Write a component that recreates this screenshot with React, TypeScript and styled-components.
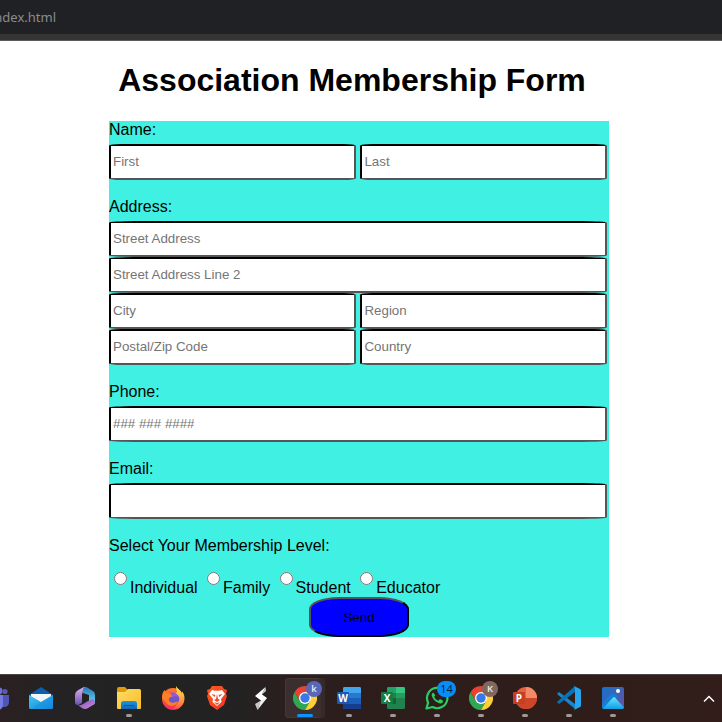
import React from "react";
import styled, { createGlobalStyle } from "styled-components";

const GlobalStyle = createGlobalStyle`
  * { box-sizing: border-box; }
  body { margin: 0; background: #fff; overflow: hidden; }
`;

const Screen = styled.div`
  width: 722px;
  height: 722px;
  display: flex;
  flex-direction: column;
  overflow: hidden;
  background: #fff;
  color: #000;
  font-family: "Liberation Sans", Arial, sans-serif;
`;

const BrowserBar = styled.header`
  height: 41px;
  flex: none;
  background: #202124;
  border-bottom: 1px solid #5b5b5b;
  display: flex;
  flex-direction: column;
`;

const Address = styled.div`
  width: 56px;
  height: 34px;
  flex: none;
  display: flex;
  justify-content: flex-end;
  align-items: center;
  overflow: hidden;
  white-space: nowrap;
  color: #8b8c8e;
  font: 13px/18px "Noto Sans", sans-serif;
`;

const BarEdge = styled.div`
  height: 6px;
  background: #353535;
`;

const Page = styled.main`
  flex: 1;
  padding: 20px 0 0 109px;
`;

const Title = styled.h1`
  margin: 0 0 22px;
  width: 486px;
  height: 38px;
  text-align: center;
  font-size: 32px;
  line-height: 38px;
  font-weight: bold;
  white-space: nowrap;
`;

const Form = styled.form`
  width: 500px;
  height: 516px;
  background: #40f1e3;
  display: flex;
  flex-direction: column;
`;

const Field = styled.section`
  margin-bottom: 18px;
`;

const Label = styled.div`
  height: 23px;
  flex: none;
  font-size: 16px;
  line-height: 18px;
`;

const Row = styled.div`
  display: flex;
  gap: 4.45px;
`;

const Input = styled.input<{ $half?: boolean }>`
  width: ${(p) => (p.$half ? "247px" : "498px")};
  height: 36px;
  flex: none;
  padding: 0 2px 2px;
  border: 2px solid;
  border-color: #000 #555 #555 #000;
  border-radius: 5%;
  background: #fff;
  font: 13.333px "Liberation Sans", Arial, sans-serif;
  outline: none;
  &::placeholder { color: #757575; }
`;

const Levels = styled.div`
  display: flex;
  flex: none;
  gap: 4.45px;
  height: 30px;
  margin-top: 7px;
`;

const Level = styled.label`
  display: flex;
  align-items: flex-start;
  font-size: 16px;
  line-height: 18px;
  input {
    width: 13px;
    height: 13px;
    margin: 5px 3px 0 5px;
  }
  span { margin-top: 12px; }
`;

const Send = styled.button`
  width: 100px;
  height: 40px;
  flex: none;
  margin: 0 0 0 200px;
  padding: 0;
  background: #00f;
  color: #000;
  border: 2px solid;
  border-color: #555 #000 #000 #555;
  border-radius: 30%;
  font: 13.333px "Liberation Sans", Arial, sans-serif;
`;

const Taskbar = styled.footer`
  height: 48px;
  flex: none;
  display: flex;
  padding-right: 4px;
  border-top: 1px solid #4b4646;
  background: linear-gradient(90deg, #2c2021 0, #242224 45px, #232223 230px, #2b1f1e 290px, #2d1d1b 400px, #321d1a 722px);
`;

const Tasks = styled.div`
  display: flex;
  flex: 1;
  margin-left: -25px;
`;

const Task = styled.div<{ $active?: boolean }>`
  position: relative;
  width: 40px;
  height: 40px;
  margin: 3px 2px 0;
  flex: none;
  display: flex;
  flex-direction: column;
  align-items: center;
  border-radius: 4px;
  ${(p) => p.$active && "background: #3a2f2e; box-shadow: inset -4px 0 #352a29, inset 0 0 0 1px #443938;"}
  svg { display: block; margin-top: 8px; flex: none; }
`;

const Indicator = styled.i<{ $active?: boolean }>`
  width: ${(p) => (p.$active ? 16 : 6)}px;
  height: 3px;
  margin-top: 4px;
  border-radius: 2px;
  background: ${(p) => (p.$active ? "#0a94ff" : "#a19997")};
`;

const Badge = styled.b<{ $color: string; $wide?: boolean }>`
  position: absolute;
  top: 3px;
  right: ${(p) => (p.$wide ? 1 : 3)}px;
  width: ${(p) => (p.$wide ? 19 : 16)}px;
  height: 16px;
  border-radius: 8px;
  background: ${(p) => p.$color};
  color: ${(p) => (p.$wide ? "#03203a" : "#eee")};
  text-align: center;
  font: ${(p) => (p.$wide ? "11px" : "600 9.5px")}/16px "Open Sans", sans-serif;
`;

const Overflow = styled.div`
  width: 18px;
  display: flex;
  align-items: center;
  justify-content: center;
`;

const Icon = ({ children }: { children: React.ReactNode }) => (
  <svg width="24" height="24" viewBox="0 0 24 24">{children}</svg>
);

const Grad = ({ id, from, to, vertical }: { id: string; from: string; to: string; vertical?: boolean }) => (
  <linearGradient id={id} x1="0" y1="0" x2={vertical ? "0" : "1"} y2="1">
    <stop stopColor={from} />
    <stop offset="1" stopColor={to} />
  </linearGradient>
);

const Teams = () => (
  <Icon>
    <circle cx="14" cy="5" r="3.5" fill="#6b70d6" />
    <circle cx="20" cy="5.5" r="2.6" fill="#5559b9" />
    <path d="M16 9h8v7c0 3-2 5-5 5h-3z" fill="#5056b5" />
    <path d="M6 9h12v9c0 4-2 6-5 6s-7-1-7-6z" fill="#777ce0" />
  </Icon>
);

const Mail = () => (
  <Icon>
    <defs><Grad id="mail" from="#40c8ef" to="#1683dd" /></defs>
    <path d="M0 9 12 1l12 8v10H0z" fill="#0d5daf" />
    <path d="M2 8h20v9H2z" fill="#f2f5f6" />
    <path d="m0 9 12 7 12-7v12.500q0 1.500-1.500 1.500h-21Q0 23 0 21.500z" fill="url(#mail)" />
    <path d="M2 22.500 12 16l12-7v12.500q0 1.500-1.500 1.500z" fill="#158de1" opacity=".45" />
  </Icon>
);

const Office = () => (
  <Icon>
    <defs>
      <Grad id="ofa" from="#e0b2ef" to="#6753b5" vertical />
      <Grad id="ofb" from="#2e76b8" to="#68e0f6" vertical />
      <Grad id="ofc" from="#7048ad" to="#cf8fe4" />
    </defs>
    <path d="M13 1q-2-.5-4 1L4.500 4.500Q2 6 2 9v7q0 3 3 3l4-2V9q0-3 2-5z" fill="url(#ofa)" />
    <path d="M11 1.500q1.500-1 4 .5l5 3q2 1 2 4v7q0 2-2 3l-4-3V9L10 7q-1-4 1-5.500" fill="url(#ofb)" />
    <path d="m3 18 6 4q3 2 6 0l5-3q2-1 2-4l-2-2-5 2-4 2.500-3 1.500-3 .5z" fill="url(#ofc)" />
  </Icon>
);

const Folder = () => (
  <Icon>
    <defs>
      <Grad id="fold" from="#ffdc65" to="#f7bd29" />
      <Grad id="tray" from="#1f93df" to="#0f66b6" vertical />
    </defs>
    <path d="M0 3q0-2 2-2h6l3 3h11q2 0 2 2v8H0z" fill="#dc9a0c" />
    <path d="M0 6h8l3-3h11.500Q24 3 24 5v17q0 1-1 1H1q-1 0-1-1z" fill="url(#fold)" />
    <path d="M4 23v-5.500Q4 15 6.500 15h11q2.500 0 2.500 2.500V23z" fill="url(#tray)" />
    <path d="M7 19h10v1H7z" fill="#0b559b" />
  </Icon>
);

const Firefox = () => (
  <Icon>
    <defs>
      <Grad id="fire" from="#ff7a23" to="#f42c67" vertical />
      <Grad id="yell" from="#fff34b" to="#ff5c3c" vertical />
    </defs>
    <circle cx="12" cy="13" r="11" fill="url(#fire)" />
    <path d="M15 0c0 3 1 4 1 6l-3 3 5 5-5 9c7 0 10.500-5 10.500-11 0-3-1-5-2.500-6.500V8c-1-4-4.500-5-6-8" fill="url(#yell)" />
    <circle cx="12.500" cy="13" r="5.800" fill="#6a55d2" />
    <path d="M1 12c0-4 1-6 2.500-8l2 3h4l2.500 3-3 1.500c-2 1-1 4 1 5 3 1 5-1 7-1-2 5-9 6-12 1z" fill="#ff7f25" />
    <path d="M9 7c4-2 8 1 8.500 5-2-2.500-4-2-6-1z" fill="#9b59cf" />
  </Icon>
);

const Brave = () => (
  <Icon>
    <defs><Grad id="brave" from="#ff5b20" to="#ef3422" /></defs>
    <path d="M7 0h10l2 3 3 1-1 4 1 2-3 9-7 5-7-5L2 10l1-2-1-4 3-1z" fill="url(#brave)" />
    <path d="m7 4 3 .7h4L17 4l3 4-4 5 .5 3-4.500 4-4.500-4L8 13 4 8z" fill="#fff" />
    <path d="m6.500 8 4 1-1 2zM17.500 8l-4 1 1 2zM12 8l1 5 2 1-3 2-3-2 2-1zM9 16l3 1 3-1-3 3z" fill="#f14a25" />
  </Icon>
);

const Bolt = () => (
  <Icon>
    <path d="M16.500 1 6 10l6 4.500-2 4.500 8-7-5-3.500z" fill="#fff" />
    <path d="m16.500 1 .5 4-4 3.500zM6 18l6-3.500L8.500 24z" fill="#c8c8c8" />
    <path d="m12 14.500-3.500 9.500L18 12z" fill="#eee" />
  </Icon>
);

const Chrome = () => (
  <Icon>
    <path d="M12 0a12 12 0 0 1 10.400 6H12L6.800 15 1.600 6A12 12 0 0 1 12 0" fill="#e94235" />
    <path d="M1.600 6 6.800 15H17.200L12 24A12 12 0 0 1 1.600 6" fill="#32a753" />
    <path d="M12 6h10.400A12 12 0 0 1 12 24l5.200-9z" fill="#fdd134" />
    <circle cx="12" cy="12" r="6" fill="#fff" />
    <circle cx="12" cy="12" r="4.700" fill="#3779e8" />
  </Icon>
);

const Letter = styled.text`
  font: bold 10px "Open Sans", sans-serif;
  fill: #fff;
  text-anchor: middle;
`;

const Word = () => (
  <Icon>
    <rect x="6" y="1" width="18" height="22" rx="1.500" fill="#2779ce" />
    <path d="M6 7V2.500Q6 1 7.500 1h15Q24 1 24 2.500V7z" fill="#42a5ed" />
    <path d="M6 12h18v6H6z" fill="#1b60b8" />
    <path d="M6 18h18v3.500q0 1.500-1.500 1.500h-15Q6 23 6 21.500z" fill="#153f8d" />
    <rect y="6" width="12" height="12" rx="1" fill="#1859b8" />
    <Letter x="6" y="15.500">W</Letter>
  </Icon>
);

const Excel = () => (
  <Icon>
    <rect x="6" y="1" width="18" height="22" rx="1.500" fill="#20824c" />
    <path d="M6 7V2.500Q6 1 7.500 1H15v6z" fill="#22a266" />
    <path d="M15 1h7.500Q24 1 24 2.500V7h-9z" fill="#35c481" />
    <path d="M15 7h9v5h-9z" fill="#249d5e" />
    <path d="M6 12h9v6H6z" fill="#196138" />
    <rect y="6" width="12" height="12" rx="1" fill="#137d43" />
    <Letter x="6" y="15.500">X</Letter>
  </Icon>
);

const WhatsApp = () => (
  <Icon>
    <path d="m1.500 22.500 1.600-6A10.200 10.200 0 1 1 7.500 21z" fill="none" stroke="#28ce61" strokeWidth="2.200" strokeLinejoin="round" />
    <path d="M8.300 6.500c-1.500.6-2 2.300-1.200 4.200 1.500 3.500 4.500 6 7.800 6.700 2 .3 3.200-1 3.200-2.700l-3.200-1.600-1.500 1.700c-2.100-.8-3.400-2.200-4.200-4l1.200-1.400z" fill="#28ce61" />
  </Icon>
);

const PowerPoint = () => (
  <Icon>
    <circle cx="13" cy="12" r="11" fill="#e56242" />
    <path d="M13 1a11 11 0 0 1 11 11H13z" fill="#f58a68" />
    <path d="M2 12h22a11 11 0 0 1-22 0" fill="#cf4529" />
    <rect y="6" width="12" height="12" rx="1" fill="#c83e20" />
    <Letter x="6" y="15.500">P</Letter>
  </Icon>
);

const Code = () => (
  <Icon>
    <path d="m0 8 2-2 16 12v5z" fill="#1687cb" />
    <path d="M0 16 18 0v6L2 18z" fill="#0873b7" />
    <path d="m17 0 6 3q1 .5 1 1.500v15q0 1-1 1.500l-6 3q1-1 1-3V3q0-2-1-3" fill="#29a5ef" />
  </Icon>
);

const Photos = () => (
  <Icon>
    <defs>
      <Grad id="sky" from="#1272d0" to="#6c519b" />
      <Grad id="hill" from="#64e5fa" to="#159be8" vertical />
    </defs>
    <rect x="1" y="1" width="22" height="22" rx="2" fill="url(#sky)" />
    <path d="M1 18 10 8q2-1.500 4 0l3 3-13 12H3q-2 0-2-2z" fill="#1380d6" />
    <path d="M2 22.500 12 11.500q1-1 2 0l9 10q-.7 1.500-2 1.500H3z" fill="url(#hill)" />
    <circle cx="17" cy="5" r="2" fill="#fff" />
  </Icon>
);

const tasks = [
  { id: "teams", Logo: Teams },
  { id: "mail", Logo: Mail },
  { id: "office", Logo: Office },
  { id: "folder", Logo: Folder, open: true },
  { id: "firefox", Logo: Firefox },
  { id: "brave", Logo: Brave },
  { id: "bolt", Logo: Bolt },
  { id: "chrome-k", Logo: Chrome, open: true, active: true, badge: "k", color: "#5966b9" },
  { id: "word", Logo: Word, open: true },
  { id: "excel", Logo: Excel, open: true },
  { id: "whatsapp", Logo: WhatsApp, open: true, badge: "14", color: "#078df8" },
  { id: "chrome", Logo: Chrome, open: true, badge: "K", color: "#806860" },
  { id: "powerpoint", Logo: PowerPoint, open: true },
  { id: "code", Logo: Code, open: true },
  { id: "photos", Logo: Photos, open: true },
];

export default function App() {
  return (
    <Screen>
      <GlobalStyle />
      <BrowserBar>
        <Address>index.html</Address>
        <BarEdge />
      </BrowserBar>
      <Page>
        <Title>Association Membership Form</Title>
        <Form>
          <Field>
            <Label>Name:</Label>
            <Row><Input $half placeholder="First" /><Input $half placeholder="Last" /></Row>
          </Field>
          <Field>
            <Label>Address:</Label>
            <Row><Input placeholder="Street Address" /></Row>
            <Row><Input placeholder="Street Address Line 2" /></Row>
            <Row><Input $half placeholder="City" /><Input $half placeholder="Region" /></Row>
            <Row><Input $half placeholder="Postal/Zip Code" /><Input $half placeholder="Country" /></Row>
          </Field>
          <Field>
            <Label>Phone:</Label>
            <Row><Input placeholder="### ### ####" /></Row>
          </Field>
          <Field>
            <Label>Email:</Label>
            <Row><Input aria-label="Email" /></Row>
          </Field>
          <Label>Select Your Membership Level:</Label>
          <Levels>
            {["Individual", "Family", "Student", "Educator"].map((level) => (
              <Level key={level}><input type="radio" name="level" /><span>{level}</span></Level>
            ))}
          </Levels>
          <Send type="button">Send</Send>
        </Form>
      </Page>
      <Taskbar>
        <Tasks>
          {tasks.map(({ id, Logo, open, active, badge, color }) => (
            <Task key={id} $active={active}>
              <Logo />
              {open && <Indicator $active={active} />}
              {badge && <Badge $color={color!} $wide={badge.length > 1}>{badge}</Badge>}
            </Task>
          ))}
        </Tasks>
        <Overflow>
          <svg width="12" height="8" viewBox="0 0 12 8"><path d="m1 6.500 5-5 5 5" fill="none" stroke="#fff" strokeWidth="1.500" /></svg>
        </Overflow>
      </Taskbar>
    </Screen>
  );
}
